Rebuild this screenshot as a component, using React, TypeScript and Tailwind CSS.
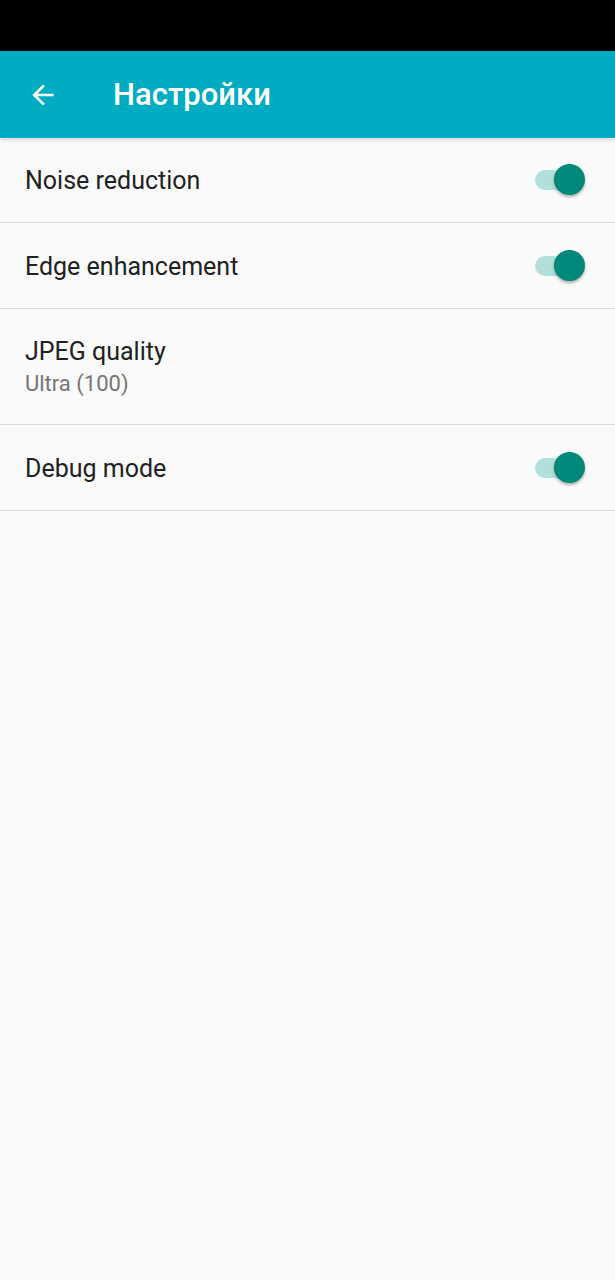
import React from "react";

function Toggle() {
  return (
    <div className="relative w-[52px] h-[32px] flex items-center">
      <div className="ml-[2px] w-[42px] h-[20px] rounded-full bg-[#b2dfdb]" />
      <div className="absolute right-0 top-0 w-[31px] h-[31px] rounded-full bg-[#00897b] shadow-[0_2px_3px_rgba(0,0,0,0.3)]" />
    </div>
  );
}

function Row({ title, subtitle, toggle }: { title: string; subtitle?: string; toggle?: boolean }) {
  return (
    <div className={`flex items-center justify-between pl-[25px] pr-[30px] border-b border-[#dcdcdc] ${subtitle ? "h-[116px]" : "h-[86px]"}`}>
      <div className="flex flex-col pt-[2px]">
        <span className="text-[25px] leading-[32px] text-[#212121]">{title}</span>
        {subtitle && <span className="text-[22px] leading-[32px] text-[#757575]">{subtitle}</span>}
      </div>
      {toggle && <Toggle />}
    </div>
  );
}

export default function App() {
  return (
    <div className="w-[615px] h-[1280px] bg-[#fafafa] flex flex-col" style={{ fontFamily: "Roboto, 'Noto Sans', sans-serif" }}>
      <div className="h-[51px] bg-black" />
      <div className="h-[87px] bg-[#00acc1] flex items-center shadow-[0_2px_4px_rgba(0,0,0,0.15)] relative z-10">
        <div className="w-[113px] pl-[29px] flex items-center">
          <svg width="28" height="28" viewBox="0 0 24 24" fill="none" stroke="white" strokeWidth="2.2" strokeLinecap="square">
            <path d="M20 12H5M12 4.5L4.5 12L12 19.5" />
          </svg>
        </div>
        <span className="text-white text-[31px] font-medium pt-[2px]">Настройки</span>
      </div>
      <div className="flex flex-col -mt-[1px]">
        <Row title="Noise reduction" toggle />
        <Row title="Edge enhancement" toggle />
        <Row title="JPEG quality" subtitle="Ultra (100)" />
        <Row title="Debug mode" toggle />
      </div>
    </div>
  );
}
